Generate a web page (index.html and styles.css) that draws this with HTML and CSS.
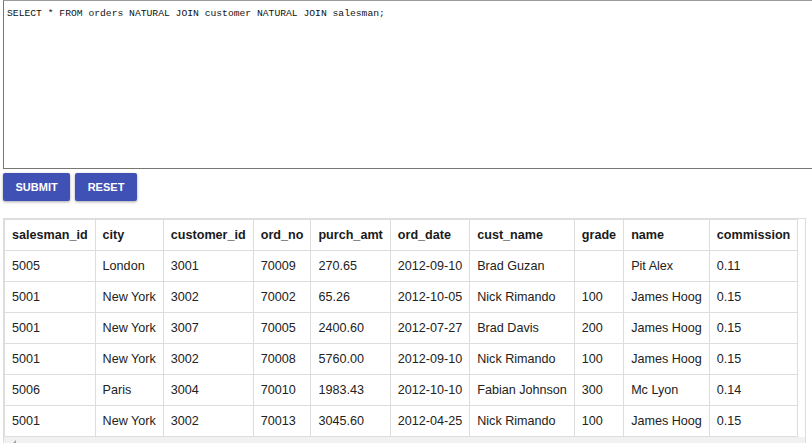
FILE: index.html
```html
<!DOCTYPE html>
<html>
<head>
<meta charset="utf-8">
<link rel="stylesheet" href="styles.css">
</head>
<body>
<div class="page">
  <textarea class="editor" spellcheck="false">SELECT * FROM orders NATURAL JOIN customer NATURAL JOIN salesman;</textarea>
  <div class="actions">
    <button class="btn">SUBMIT</button>
    <button class="btn">RESET</button>
  </div>
  <div class="result">
    <table class="grid">
      <thead>
        <tr><th>salesman_id</th><th>city</th><th>customer_id</th><th>ord_no</th><th>purch_amt</th><th>ord_date</th><th>cust_name</th><th>grade</th><th>name</th><th>commission</th></tr>
      </thead>
      <tbody>
        <tr><td>5005</td><td>London</td><td>3001</td><td>70009</td><td>270.65</td><td>2012-09-10</td><td>Brad Guzan</td><td></td><td>Pit Alex</td><td>0.11</td></tr>
        <tr><td>5001</td><td>New York</td><td>3002</td><td>70002</td><td>65.26</td><td>2012-10-05</td><td>Nick Rimando</td><td>100</td><td>James Hoog</td><td>0.15</td></tr>
        <tr><td>5001</td><td>New York</td><td>3007</td><td>70005</td><td>2400.60</td><td>2012-07-27</td><td>Brad Davis</td><td>200</td><td>James Hoog</td><td>0.15</td></tr>
        <tr><td>5001</td><td>New York</td><td>3002</td><td>70008</td><td>5760.00</td><td>2012-09-10</td><td>Nick Rimando</td><td>100</td><td>James Hoog</td><td>0.15</td></tr>
        <tr><td>5006</td><td>Paris</td><td>3004</td><td>70010</td><td>1983.43</td><td>2012-10-10</td><td>Fabian Johnson</td><td>300</td><td>Mc Lyon</td><td>0.14</td></tr>
        <tr><td>5001</td><td>New York</td><td>3002</td><td>70013</td><td>3045.60</td><td>2012-04-25</td><td>Nick Rimando</td><td>100</td><td>James Hoog</td><td>0.15</td></tr>
      </tbody>
    </table>
    <div class="hscroll"><span class="arrow"></span></div>
  </div>
</div>
</body>
</html>
```

FILE: styles.css
```css
html, body {
  margin: 0;
  padding: 0;
  background: #fff;
  overflow: hidden;
}
.page {
  padding: 0 0 0 3px;
  width: 840px;
  font-family: "Liberation Sans", Arial, sans-serif;
}
.editor {
  display: block;
  box-sizing: border-box;
  width: 830px;
  height: 169px;
  margin: 0;
  padding: 6px 3px;
  border: 1px solid #767676;
  border-top-color: #9a9a9a;
  font-family: "Liberation Mono", "DejaVu Sans Mono", monospace;
  font-size: 9.7px;
  line-height: 13px;
  color: #111;
  resize: none;
  outline: none;
  background: #fff;
}
.actions {
  display: flex;
  gap: 5px;
  margin-top: 4px;
}
.btn {
  height: 28px;
  padding: 0 12.5px;
  border: none;
  border-radius: 2px;
  background: #3f51b5;
  color: #fff;
  font-family: "Liberation Sans", Arial, sans-serif;
  font-weight: bold;
  font-size: 11px;
  box-shadow: 0 1px 3px rgba(0,0,0,0.35);
  cursor: pointer;
}
.result {
  margin-top: 17px;
  width: 803px;
  border: 1px solid #ddd;
  box-sizing: border-box;
  border-bottom: none;
}
.grid {
  border-collapse: collapse;
  border: 1px solid #ddd;
  font-size: 12.6px;
  color: #222;
}
.grid th, .grid td {
  border: 1px solid #ddd;
  padding: 7px;
  text-align: left;
  line-height: 16px;
  white-space: nowrap;
}
.grid th {
  font-weight: bold;
  color: #1a1a1a;
}
.hscroll {
  height: 15px;
  background: #f1f1f1;
  position: relative;
}
.arrow {
  position: absolute;
  left: 9px;
  top: 3px;
  width: 0;
  height: 0;
  border-top: 3px solid transparent;
  border-bottom: 3px solid transparent;
  border-right: 3px solid #a3a3a3;
}
```
